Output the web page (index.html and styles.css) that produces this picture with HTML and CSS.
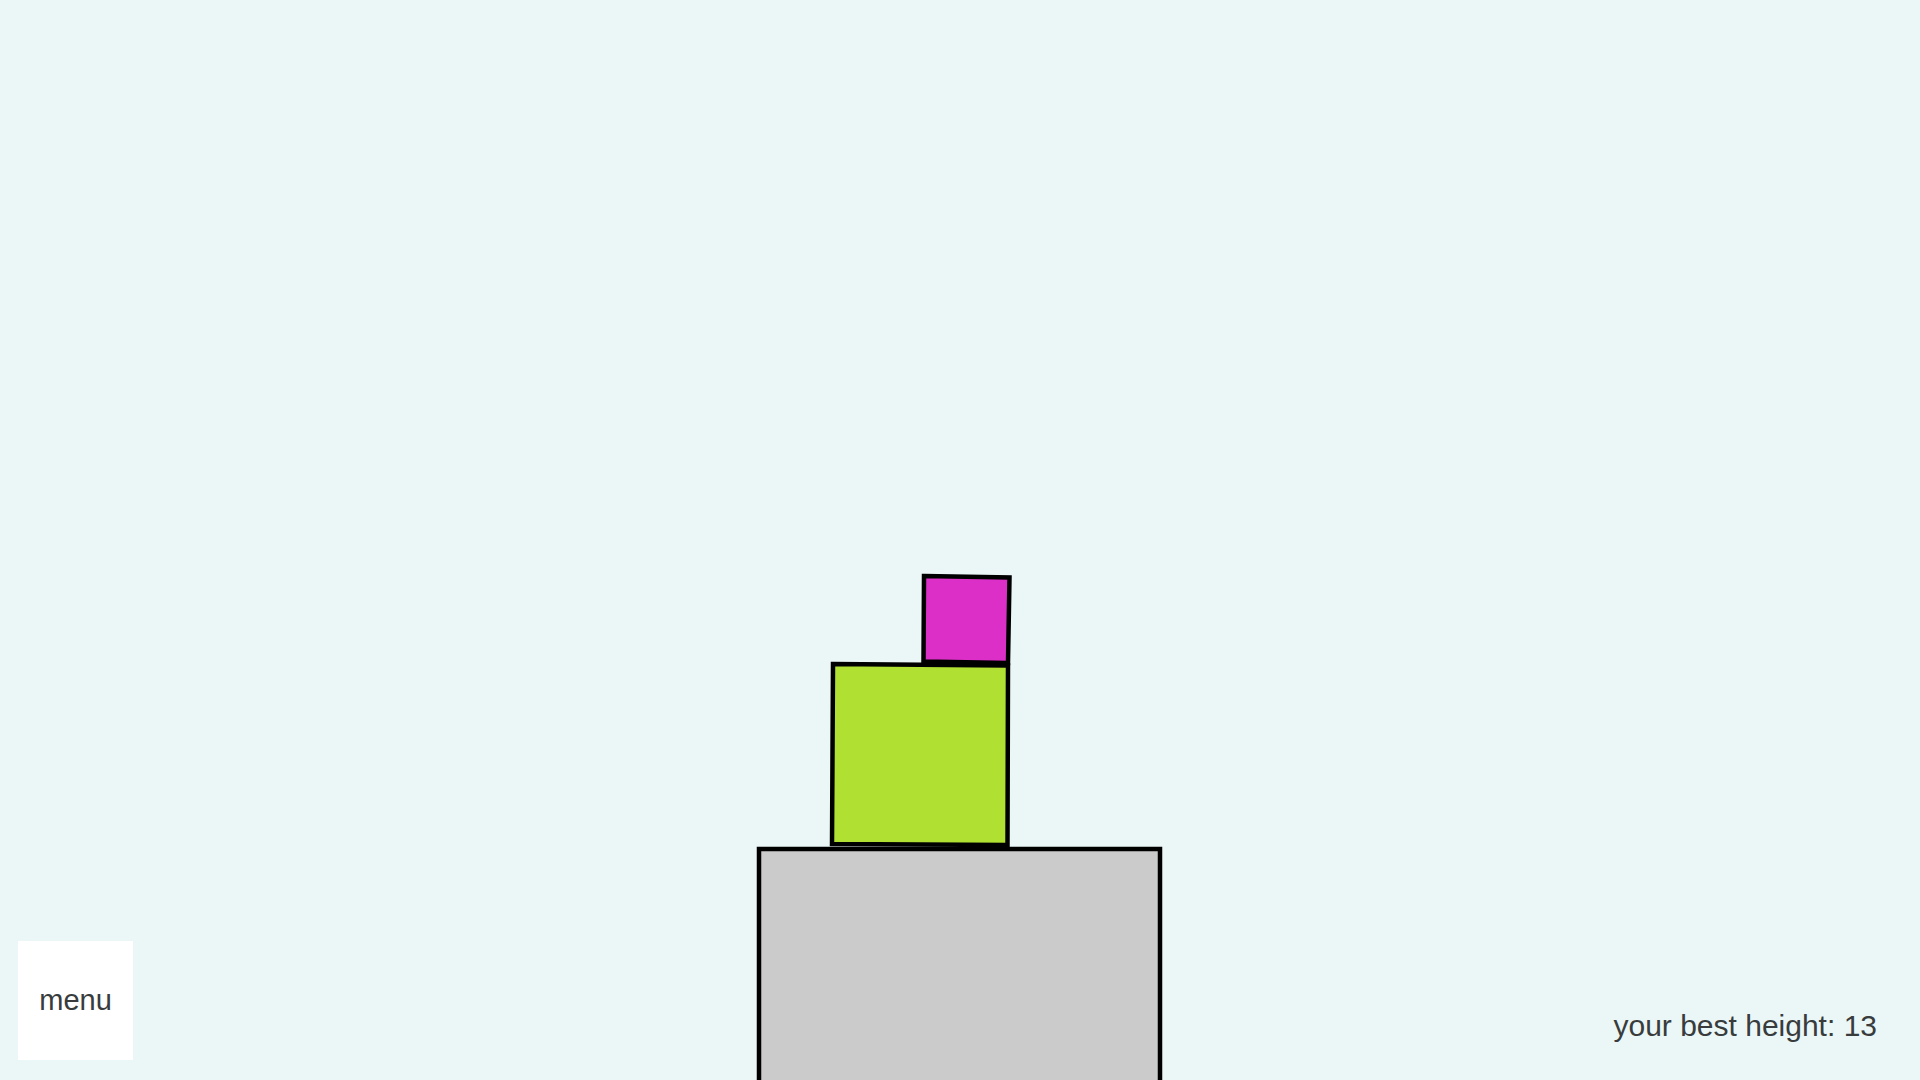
FILE: index.html
```html
<!DOCTYPE html>
<html>
<head>
<meta charset="utf-8">
<link rel="stylesheet" href="styles.css">
</head>
<body>
<div class="game">
  <svg class="scene" viewBox="0 0 1920 1080" width="1920" height="1080">
    <polygon class="blk ground" points="759,849 1160,849 1160,1090 759,1090"/>
    <polygon class="blk pink" points="924,576 1009.5,577.5 1008,663 923.5,661.5"/>
    <polygon class="blk lime" points="833,664 1008,665.5 1007.5,845 832,844"/>
  </svg>
  <button class="menu">menu</button>
  <div class="best">your best height: 13</div>
</div>
</body>
</html>
```
FILE: styles.css
```css
html, body {
  margin: 0;
  padding: 0;
  width: 1920px;
  height: 1080px;
  overflow: hidden;
  background: #ebf7f7;
  font-family: "Liberation Sans", Arial, sans-serif;
}
.game {
  position: relative;
  width: 1920px;
  height: 1080px;
}
.scene {
  position: absolute;
  left: 0;
  top: 0;
  display: block;
}
.blk {
  stroke: #000;
  stroke-width: 4.5;
  stroke-linejoin: miter;
}
.ground { fill: #cbcbcb; }
.lime { fill: #b0e032; }
.pink { fill: #db2fc7; }
.menu {
  position: absolute;
  left: 18px;
  bottom: 20px;
  width: 115px;
  height: 119px;
  background: #fff;
  border: none;
  padding: 0;
  margin: 0;
  display: flex;
  align-items: center;
  justify-content: center;
  font-family: "Liberation Sans", Arial, sans-serif;
  font-size: 29px;
  line-height: 1;
  color: #383c3d;
}
.best {
  position: absolute;
  right: 43px;
  bottom: 39px;
  font-size: 30px;
  line-height: 1;
  color: #383c3d;
}
```
